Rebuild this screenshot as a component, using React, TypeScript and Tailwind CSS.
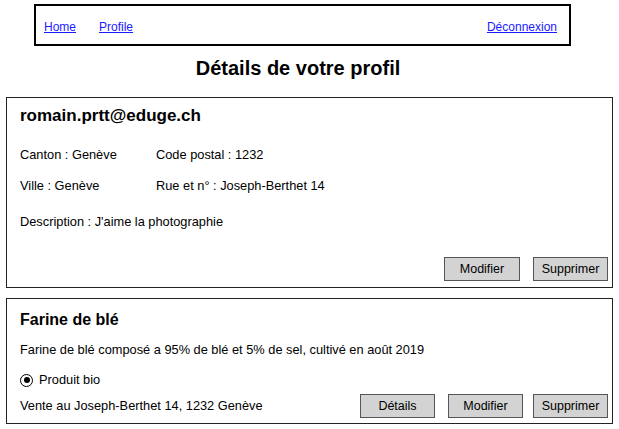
const sketch = { fontFamily: '"Liberation Sans", Arial, sans-serif' };

function SketchButton({ label, wide }: { label: string; wide?: boolean }) {
  return (
    <button
      className={
        wide
          ? "h-6 w-[76px] border border-[#555] bg-[#d3d3d3] text-[12.5px] leading-none text-black"
          : "h-6 w-[75px] border border-[#555] bg-[#d3d3d3] text-[12.5px] leading-none text-black"
      }
    >
      {label}
    </button>
  );
}

export default function App() {
  return (
    <div className="min-h-[429px] bg-white px-[6px] pt-1 text-black" style={sketch}>
      <nav className="ml-[28px] flex h-[42px] w-[537px] items-center border-2 border-black px-[8px] pt-[3px] text-[12px]">
        <a href="#" className="text-[#1a1aff] underline">
          Home
        </a>
        <a href="#" className="ml-[23px] text-[#1a1aff] underline">
          Profile
        </a>
        <a href="#" className="ml-auto mr-[4px] text-[#1a1aff] underline">
          Déconnexion
        </a>
      </nav>

      <h1 className="mt-[10px] pr-[23px] text-center text-[20px] font-bold leading-[24px]">
        Détails de votre profil
      </h1>

      <section className="mt-[17px] h-[191px] border border-[#222] px-[13px] pt-[8px] text-[12.8px] leading-[16px]">
        <h2 className="text-[17px] font-bold leading-[20px]">romain.prtt@eduge.ch</h2>
        <div className="mt-[21px] flex">
          <span className="w-[136px]">Canton : Genève</span>
          <span>Code postal : 1232</span>
        </div>
        <div className="mt-[15px] flex">
          <span className="w-[136px]">Ville : Genève</span>
          <span>Rue et n° : Joseph-Berthet 14</span>
        </div>
        <p className="mt-[20px]">Description : J'aime la photographie</p>
        <div className="-mr-[9px] mt-[27px] flex justify-end gap-[13px]">
          <SketchButton label="Modifier" wide />
          <SketchButton label="Supprimer" />
        </div>
      </section>

      <section className="mt-[10px] border border-[#222] px-[13px] pb-[5px] pt-[11px] text-[12.8px] leading-[16px]">
        <h2 className="text-[16px] font-bold leading-[20px]">Farine de blé</h2>
        <p className="mt-[12px]">
          Farine de blé composé a 95% de blé et 5% de sel, cultivé en août 2019
        </p>
        <div className="mt-[14px] flex items-center gap-[6px]">
          <span className="flex h-[13px] w-[13px] items-center justify-center rounded-full border-[1.5px] border-black">
            <span className="h-[6px] w-[6px] rounded-full bg-black" />
          </span>
          <span>Produit bio</span>
        </div>
        <div className="-mr-[9px] mt-[6px] flex items-center">
          <span>Vente au Joseph-Berthet 14, 1232 Genève</span>
          <div className="ml-auto flex">
            <SketchButton label="Détails" />
            <div className="ml-[13px]">
              <SketchButton label="Modifier" />
            </div>
            <div className="ml-[10px]">
              <SketchButton label="Supprimer" />
            </div>
          </div>
        </div>
      </section>
    </div>
  );
}
